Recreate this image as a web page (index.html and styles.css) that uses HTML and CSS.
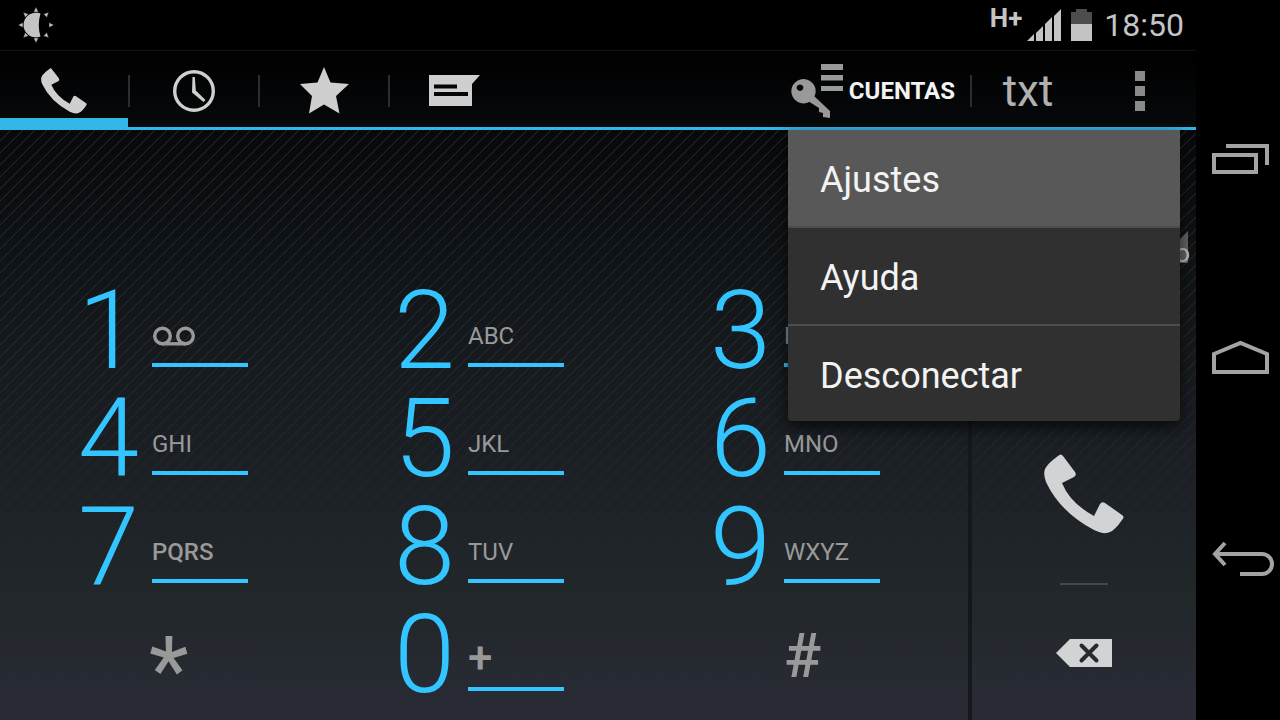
FILE: index.html
```
<!DOCTYPE html>
<html lang="es">
	<head>
		<meta charset="UTF-8" />
		<meta name="viewport" content="width=device-width, initial-scale=1.0" />

		<title>Teléfono</title>

		<link rel="stylesheet" href="styles.css">
	</head>

	<body>
		<div class="screen">

			<div class="status-bar">
				<svg class="sun" viewBox="0 0 36 36" width="36" height="36">
					<path d="M22.500 6.500A12.400 12.400 0 1 0 22.500 29.500Q19 18 22.500 6.500Z"/>
					<path id="ray" class="ray" d="M18 0l2.500 5h-5z"/>
					<use href="#ray" transform="rotate(45 18 18)"/>
					<use href="#ray" transform="rotate(90 18 18)"/>
					<use href="#ray" transform="rotate(135 18 18)"/>
					<use href="#ray" transform="rotate(180 18 18)"/>
					<use href="#ray" transform="rotate(225 18 18)"/>
					<use href="#ray" transform="rotate(270 18 18)"/>
					<use href="#ray" transform="rotate(315 18 18)"/>
				</svg>
				<span class="network">H+</span>
				<svg class="signal" viewBox="0 0 34 32" width="34" height="32">
					<path d="M0 32L7 25V32ZM9 24L16 17V32H9ZM18 15L25 8V32H18ZM27 7L34 0V32H27Z"/>
				</svg>
				<svg class="battery" viewBox="0 0 21 32" width="21" height="32">
					<path class="empty" d="M5 0H16V3H21V15H0V3H5Z"/>
					<path d="M0 15H21V32H0Z"/>
				</svg>
				<span class="clock">18:50</span>
			</div>

			<div class="app">
				<div class="header">
					<button class="tab active" aria-label="Teléfono">
						<svg viewBox="0 0 80 80" width="46" height="46"><path id="handset" d="M14 2Q17 -1 19 2L31 18Q33 21 30 23L18 29Q26 49 50 62L56 50Q58 47 61 49L78 61Q81 63 78 66Q71 76 66 78Q60 81 50 76Q16 58 2 28Q-1 20 1 15Q4 9 14 2Z"/></svg>
					</button>
					<span class="divider"></span>
					<button class="tab" aria-label="Recientes">
						<svg viewBox="0 0 42 42" width="42" height="42">
							<circle class="line" cx="21" cy="21" r="19.3" stroke-width="3.4"/>
							<path d="M19.5 7H21.8L22.8 20.5L32.5 30L30.5 32L19 22.5Z"/>
						</svg>
					</button>
					<span class="divider"></span>
					<button class="tab" aria-label="Favoritos">
						<svg viewBox="0 0 49 47" width="49" height="47"><path d="M24 0L30.5 15.5L49 17L36 29L39.5 46.5L24 37.5L9 46.5L12 29L0 17L17.5 15.5Z"/></svg>
					</button>
					<span class="divider"></span>
					<button class="tab" aria-label="Mensajes">
						<svg viewBox="0 0 51 31" width="51" height="31"><path fill-rule="evenodd" d="M0 0H51L43 9V31H0ZM5 9.500V13.500H28V9.500ZM5 17V21H39V17Z"/></svg>
					</button>

					<button class="accounts">
						<svg viewBox="0 0 53 56" width="53" height="56">
							<path d="M31 1H53V7H31ZM31 12H53V17.500H31ZM31 23H53V28H31Z"/>
							<path fill-rule="evenodd" d="M13.500 16a12.200 12.200 0 1 0 .01 0ZM10 21.400a3.300 3.300 0 1 1 -.01 0Z"/>
							<path d="M24 33L40 48V55L33 54V50L29 49V45L18 38Z"/>
						</svg>
						CUENTAS
					</button>
					<span class="divider"></span>
					<button class="txt">txt</button>
					<button class="more" aria-label="Más opciones">
						<svg viewBox="0 0 10 40" width="10" height="40"><path d="M0 0H10V10H0ZM0 15H10V25H0ZM0 30H10V40H0Z"/></svg>
					</button>

					<div class="menu" role="menu">
						<button class="pressed" role="menuitem">Ajustes</button>
						<button role="menuitem">Ayuda</button>
						<button role="menuitem">Desconectar</button>
					</div>
				</div>

				<div class="number">
					<svg class="sim" viewBox="0 0 32 32" width="32" height="32"><path d="M0 32L32 0V32Z"/></svg>
					<span>o</span>
				</div>

				<div class="dialer">
					<div class="keypad">
						<button class="key">
							<span class="digit">1</span>
							<span class="letters">
								<svg viewBox="0 0 44 20" width="44" height="20">
									<g class="line" stroke-width="3.4">
										<circle cx="10.500" cy="10" r="7.8"/>
										<circle cx="33.500" cy="10" r="7.8"/>
										<path d="M10 17.800H34"/>
									</g>
								</svg>
							</span>
						</button>
						<button class="key"><span class="digit">2</span><span class="letters">ABC</span></button>
						<button class="key"><span class="digit">3</span><span class="letters">DEF</span></button>
						<button class="key"><span class="digit">4</span><span class="letters">GHI</span></button>
						<button class="key"><span class="digit">5</span><span class="letters">JKL</span></button>
						<button class="key"><span class="digit">6</span><span class="letters">MNO</span></button>
						<button class="key"><span class="digit">7</span><span class="letters strong">PQRS</span></button>
						<button class="key"><span class="digit">8</span><span class="letters">TUV</span></button>
						<button class="key"><span class="digit">9</span><span class="letters">WXYZ</span></button>
						<button class="key symbol star">*</button>
						<button class="key"><span class="digit">0</span><span class="letters plus">+</span></button>
						<button class="key symbol">#</button>
					</div>

					<div class="side">
						<button class="call" aria-label="Llamar">
							<svg viewBox="0 0 80 80" width="80" height="80"><use href="#handset"/></svg>
						</button>
						<span class="rule"></span>
						<button class="delete" aria-label="Borrar">
							<svg viewBox="0 0 56 28" width="56" height="28">
								<path d="M0 14L14 0H56V28H14Z"/>
								<path class="cross" d="M25.500 6.500L40.500 21.500M40.500 6.500L25.500 21.500"/>
							</svg>
						</button>
					</div>
				</div>
			</div>
		</div>

		<div class="nav">
			<button aria-label="Aplicaciones recientes">
				<svg viewBox="0 0 84 64" width="84" height="64"><path d="M18 27H60V44H18ZM30 18H71V37"/></svg>
			</button>
			<button aria-label="Inicio">
				<svg viewBox="0 0 84 64" width="84" height="64"><path d="M18 26L44.500 15L71 26V44H18Z"/></svg>
			</button>
			<button aria-label="Atrás">
				<svg viewBox="0 0 84 64" width="84" height="64"><path d="M20 26H66A10 10 0 0 1 66 46H44"/><path d="M29 15L19 26L29 37"/></svg>
			</button>
		</div>
	</body>
</html>
```
FILE: styles.css
```
* { box-sizing:border-box }

body {
	display:flex;
	min-height:100vh;
	margin:0;
	background:#000; color:#c4c4c4;
	font-family:Roboto, "Liberation Sans", sans-serif;
}

button {
	margin:0; padding:0; border:0;
	background:none; color:inherit;
	font-family:inherit;
}

svg       { display:block; flex:none; fill:currentColor }
svg .line { fill:none; stroke:currentColor }

.screen {
	display:flex; flex:1; flex-direction:column;
	min-width:0;
}

/* status bar */

.status-bar {
	display:flex; align-items:center;
	height:51px; padding:0 12px 0 18px;
	border-bottom:1px solid #131313;
}

.ray { stroke:#000; stroke-width:0.5 }

.network {
	margin:0 5px 14px auto;
	font-size:26px; font-weight:700; line-height:24px;
}

.battery        { margin:0 12px 0 10px }
.battery .empty { fill:#4d4d4d }
.clock          { font-size:32px; line-height:40px }

/* dialer app */

.app {
	position:relative;
	display:flex; flex:1; flex-direction:column;
	background:linear-gradient(#000, #07090b 12%, #131619 37%, #1b1f24 60%, #22272a 82%, #282b34 97%);
}

/* diagonal hatching, fading out towards the bottom */
.app::before {
	content:"";
	position:absolute; inset:79px 0 0 0;
	background:linear-gradient(135deg, transparent 46%, #223033 48%, #223033 52%, transparent 54%) -1px 0 / 12px 12px;
	mask-image:linear-gradient(#000 40%, transparent 96%);
}

.header {
	position:relative; z-index:1;
	display:flex; align-items:center;
	height:79px;
	color:#cfcfcf;
	box-shadow:inset 0 -3px #33b5e5;
}

.tab {
	display:flex; align-items:center; justify-content:center;
	width:128px; height:100%;
}

.tab.active { box-shadow:inset 0 -12px #33b5e5 }

.divider {
	width:2px; height:32px;
	background:#2b2d2e;
}

.accounts {
	display:flex; align-items:center; gap:6px;
	margin-left:auto; padding-right:15px;
	color:#f3f3f3;
	font-size:24px; font-weight:700;
}

.accounts svg { color:#999 }

.txt, .more {
	display:flex; align-items:center; justify-content:center;
	width:112px; height:100%;
}

.txt  { color:#b0b0b0; font-size:44px; font-weight:400 }
.more { color:#8a8a8a }

.menu {
	position:absolute; top:100%; right:16px;
	width:392px;
	border-radius:0 0 4px 4px;
	background:#303030;
	box-shadow:0 6px 16px rgba(0, 0, 0, 0.7);
}

.menu button {
	display:block;
	width:100%; height:98px; padding:4px 32px 0;
	border-bottom:2px solid #4d4d4d;
	color:#f3f3f3;
	font-size:36px; text-align:left;
}

.menu button:last-child { height:95px; border-bottom:0 }
.menu .pressed          { background:#585858 }

.number {
	position:relative;
	display:flex; flex:1; align-items:flex-end; justify-content:flex-end;
	min-height:158px; padding:0 6px 20px 0;
	font-size:26px;
}

.sim {
	position:absolute; right:8px; bottom:25px;
	color:#666;
}

.number span { position:relative }

.dialer {
	position:relative;
	display:flex;
}

.keypad {
	display:grid; flex:1;
	grid-template-columns:repeat(3, 1fr);
	grid-auto-rows:108px;
	padding:0 10px;
}

.key {
	display:flex; align-items:flex-start;
	padding-left:68px;
	color:#999;
	text-align:left;
}

.digit {
	width:74px;
	color:#33c5ff;
	font-size:110px; font-weight:300; line-height:85px;
}

.letters {
	display:flex; flex-direction:column; justify-content:flex-end;
	width:96px; height:79px; padding-bottom:11px;
	border-bottom:4px solid #33c5ff;
	font-size:24px; line-height:32px;
}

.letters svg    { margin-bottom:6px }
.letters.strong { font-weight:500 }
.letters.plus   { padding-bottom:13px; font-size:44px; font-weight:500 }

.symbol {
	padding-left:142px;
	font-size:62px; font-weight:500; line-height:88px;
}

.star { padding-left:139px; font-size:92px; font-weight:400; line-height:118px }

.side {
	display:flex; flex-direction:column; align-items:center;
	width:228px; padding-top:116px;
	border-left:4px solid #15181a;
	color:#d2d3d4;
}

.call, .delete {
	display:flex; align-items:center; justify-content:center;
	width:100%;
}

.call   { flex:1 }
.delete { height:135px }
.cross  { stroke:#262b30; stroke-width:4; stroke-linecap:round }

.rule {
	width:48px; height:2px;
	background:#45484b;
}

/* system buttons */

.nav {
	display:flex; flex-direction:column; justify-content:center;
	width:84px;
	background:#000; color:#a3a3a3;
}

.nav button { display:flex; align-items:center; height:200px }
.nav svg    { fill:none; stroke:currentColor; stroke-width:4 }
```
